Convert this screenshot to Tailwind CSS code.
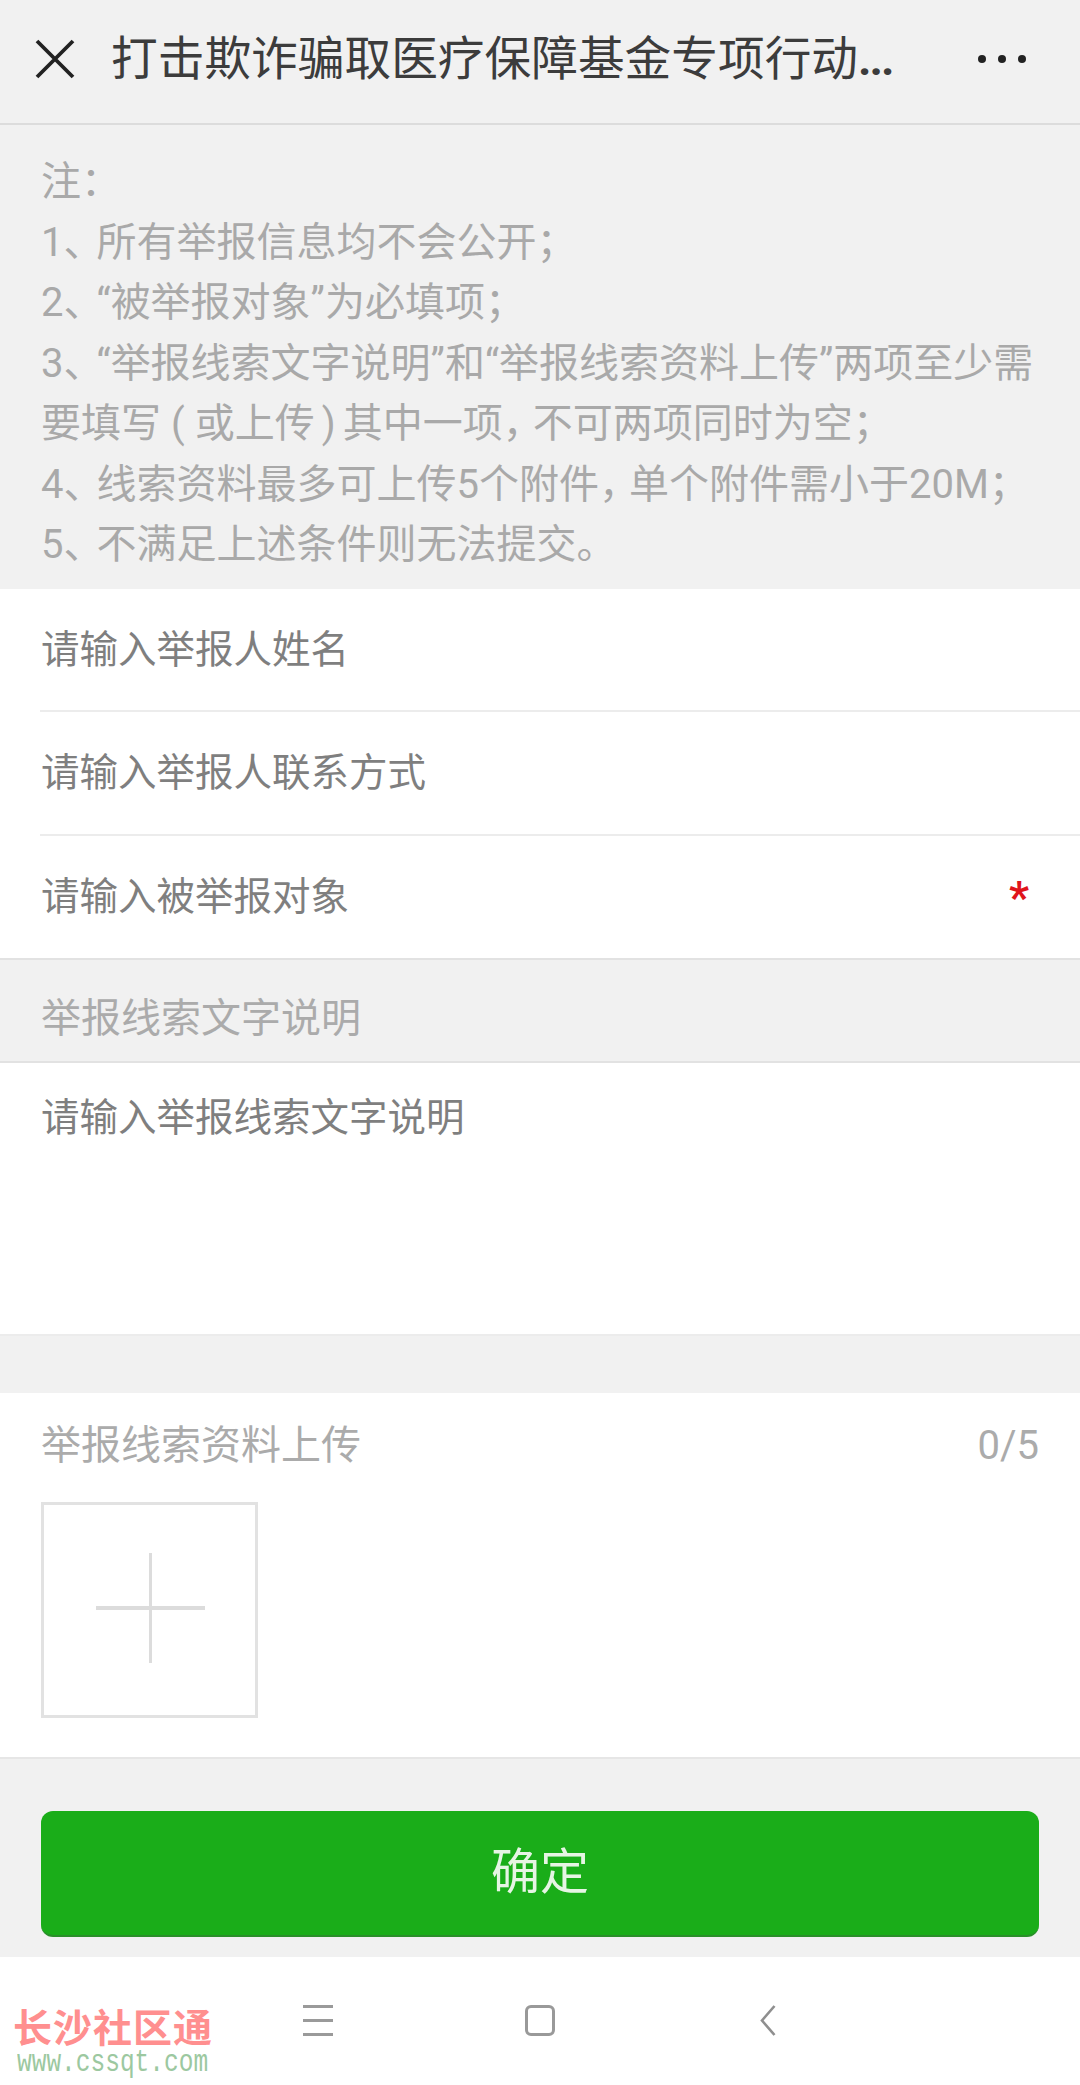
<!DOCTYPE html>
<html lang="zh">
<head>
<meta charset="utf-8">
<script src="https://cdn.jsdelivr.net/npm/@tailwindcss/browser@4"></script>
</head>
<body class="m-0 bg-[#f1f1f1] font-['Roboto','Noto_Sans_CJK_SC',sans-serif]">
<div class="relative flex h-[2085px] w-[1080px] flex-col overflow-hidden">
  <header class="flex h-[125px] shrink-0 items-center border-b-2 border-[#dcdcdc] pb-[5px] pl-[35px] pr-[54px]">
    <svg class="h-[40px] w-[40px] shrink-0" viewBox="0 0 40 40" fill="none" stroke="#222" stroke-width="3.8"><path d="M2 2 38 38M38 2 2 38"/></svg>
    <h1 class="ml-[36px] flex-1 whitespace-nowrap text-[46.7px] leading-[60px] font-normal text-[#3c3c3c]">打击欺诈骗取医疗保障基金专项行动<span class="font-bold tracking-[-2px]">...</span></h1>
    <div class="flex gap-[12px]">
      <span class="h-[8px] w-[8px] rounded-full bg-[#222]"></span>
      <span class="h-[8px] w-[8px] rounded-full bg-[#222]"></span>
      <span class="h-[8px] w-[8px] rounded-full bg-[#222]"></span>
    </div>
  </header>

  <section class="h-[464px] shrink-0 pl-[41px] pt-[27px] text-[40px] leading-[60.5px] whitespace-nowrap text-[#a9a9a9]">
    <p>注：</p>
    <p>1<span class="tracking-[-7px]">、</span>所有举报信息均不会公开；</p>
    <p>2<span class="tracking-[-7px]">、</span>“被举报对象”为必填项；</p>
    <p>3<span class="tracking-[-7px]">、</span>“举报线索文字说明”和“举报线索资料上传”两项至少需</p>
    <p>要填写<span class="mx-[10px]">(</span>或上传<span class="mx-[7px]">)</span>其中一项<span class="tracking-[-10px]">，</span>不可两项同时为空；</p>
    <p>4<span class="tracking-[-7px]">、</span>线索资料最多可上传5个附件<span class="tracking-[-10px]">，</span>单个附件需小于20M；</p>
    <p>5<span class="tracking-[-7px]">、</span>不满足上述条件则无法提交。</p>
  </section>

  <section class="shrink-0 border-b-2 border-[#e2e2e2] bg-white pl-[40px] text-[38.5px] text-[#7f7f7f]">
    <div class="flex h-[123px] items-center border-b-2 border-[#ececec] pl-[1px]">请输入举报人姓名</div>
    <div class="flex h-[124px] items-center border-b-2 border-[#ececec] pl-[1px]">请输入举报人联系方式</div>
    <div class="flex h-[122px] items-center justify-between pl-[1px] pr-[51px]">请输入被举报对象<span class="mt-[2px] text-[44px] leading-none font-bold text-[#e0141c]">*</span></div>
  </section>

  <div class="flex h-[103px] shrink-0 items-center border-b-2 border-[#e2e2e2] pl-[41px] pt-[16px] text-[40px] text-[#ababab]">举报线索文字说明</div>

  <div class="h-[273px] shrink-0 border-b-2 border-[#ececec] bg-white pl-[41px] pt-[27px] text-[38.5px] leading-[56px] text-[#7f7f7f]">请输入举报线索文字说明</div>

  <section class="mt-[57px] h-[366px] shrink-0 border-b-2 border-[#e6e6e6] bg-white px-[41px] pt-[26px]">
    <div class="flex items-center justify-between text-[40px] leading-[54px] text-[#ababab]"><span>举报线索资料上传</span><span>0/5</span></div>
    <div class="relative mt-[29px] h-[216px] w-[217px] border-[3px] border-[#e2e2e2]">
      <span class="absolute left-[52px] top-[101px] h-[4px] w-[109px] bg-[#dcdcdc]"></span>
      <span class="absolute left-[105px] top-[48px] h-[110px] w-[3px] bg-[#dcdcdc]"></span>
    </div>
  </section>

  <div class="mx-[41px] mt-[52px] flex h-[126px] shrink-0 items-center justify-center rounded-[12px] border-b-2 border-[#2a8f2a] bg-[#1aad19] text-[49px] text-[#e6f5e4]">确定</div>

  <nav class="mt-[20px] flex h-[128px] shrink-0 items-start bg-white pl-[303px] pt-[48px]">
    <div class="flex h-[31px] w-[30px] flex-col justify-between">
      <span class="h-[3px] bg-[#9a9a9a]"></span>
      <span class="h-[3px] bg-[#9a9a9a]"></span>
      <span class="h-[3px] bg-[#9a9a9a]"></span>
    </div>
    <div class="ml-[192px] h-[31px] w-[30px] rounded-[6px] border-[3px] border-[#999]"></div>
    <svg class="ml-[205px] h-[31px] w-[16px]" viewBox="0 0 16 31" fill="none" stroke="#8f8f8f" stroke-width="2.6"><path d="M14.5 1 2 15.5 14.5 30"/></svg>
  </nav>

  <div class="absolute left-[13px] top-[2008px] whitespace-nowrap">
    <div class="w-[200px] text-[39px] leading-[42px] font-bold tracking-[1px] text-[#ff8f8f]">长沙社区通</div>
    <div class="origin-top scale-y-130 font-['Liberation_Mono',monospace] pl-[4px] text-[24.5px] leading-[20px] text-[#9cc8a0]">www.cssqt.com</div>
  </div>
</div>
</body>
</html>
